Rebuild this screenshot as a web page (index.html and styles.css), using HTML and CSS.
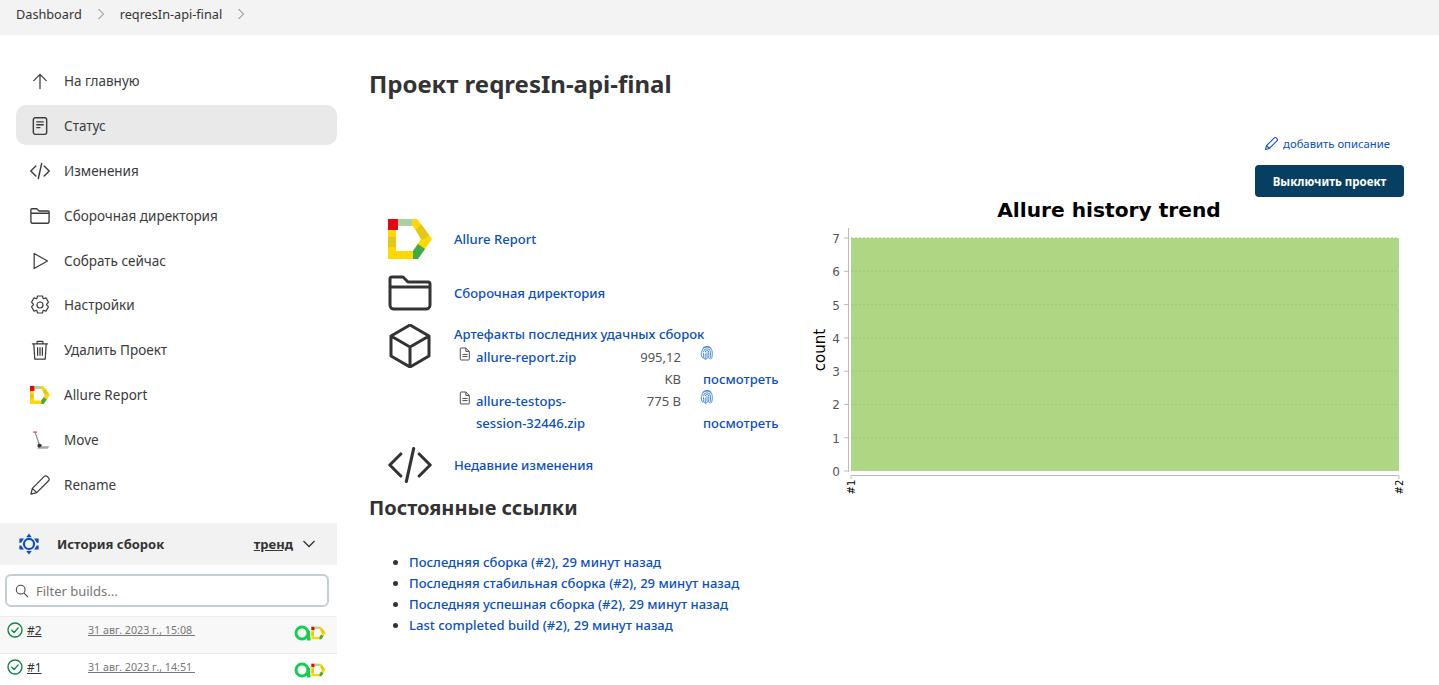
FILE: index.html
```html
<!DOCTYPE html>
<html lang="ru">

<head>
  <meta charset="UTF-8" />
  <title>reqresIn-api-final</title>
  <link rel="stylesheet" href="styles.css">
</head>

<body>
  <svg class="defs" width="0" height="0">
    <defs>
      <symbol id="allure" viewBox="0 0 44 40">
        <path d="M0 0H29L44 20L30 40H0ZM8 7V32H25L33 20L25 7Z" fill="#ffd800" fill-rule="evenodd" />
        <path d="M0 0h10v11H0z" fill="#e30613" />
        <path d="M10 0h14v7H10z" fill="#a9d3a3" />
        <path d="M33 5l8 11-4 4h-4l-5-9z" fill="#e3c814" />
        <path d="M0 18h8v10H0z" fill="#e3c814" />
        <path d="M37 30L30 40h-5v-8l5-7z" fill="#3dab4a" />
      </symbol>
      <symbol id="folder" viewBox="1 2 22 20">
        <path d="M2 6.500V18a2 2 0 0 0 2 2h16a2 2 0 0 0 2-2V7.500a1 1 0 0 0-1-1H11L9 4.500a1 1 0 0 0-.8-.5H3a1 1 0 0 0-1 1v1.500zM2 9h20" fill="none" stroke="currentColor" stroke-width="1.500" stroke-linejoin="round" />
      </symbol>
      <symbol id="code" viewBox="0 2 24 20">
        <path d="M7 6l-6 6 6 6M17 6l6 6-6 6M14 3l-4 18" fill="none" stroke="currentColor" stroke-width="1.700" stroke-linecap="round" stroke-linejoin="round" />
      </symbol>
      <symbol id="doc" viewBox="0 0 14 16">
        <path d="M2.500 1H8l4 4v9a1 1 0 0 1-1 1H2.500a1 1 0 0 1-1-1V2a1 1 0 0 1 1-1zM8 1v4h4M4 8.500h6M4 11h6" fill="none" stroke="currentColor" stroke-width="1.100" />
      </symbol>
      <symbol id="print" viewBox="0 0 16 18">
        <g fill="none" stroke="currentColor" stroke-width=".9">
          <path d="M2 7a6 6 0 0 1 12 0v3a6 6 0 0 1-2 5" />
          <path d="M3.500 14A6 6 0 0 1 1.500 10V7" />
          <path d="M4 7a4 4 0 0 1 8 0v4a4 4 0 0 1-1.500 3.500" />
          <path d="M5.500 15A5 5 0 0 1 4 10.500V8" />
          <path d="M6 7a2 2 0 0 1 4 0v4a4 4 0 0 1-1 3" />
          <path d="M7 16a5 5 0 0 1-1-4V8.500M8 7v4.500a3 3 0 0 1-.5 3" />
          <path d="M3 2.500a7 7 0 0 1 10 0" />
        </g>
      </symbol>
      <symbol id="ok" viewBox="0 0 16 16">
        <circle cx="8" cy="8" r="7" fill="none" stroke="#138347" stroke-width="1.400" />
        <path d="M4.800 8.200l2.300 2.300 4.100-4.600" fill="none" stroke="#138347" stroke-width="1.400" stroke-linecap="round" stroke-linejoin="round" />
      </symbol>
      <symbol id="ad" viewBox="0 0 32 16">
        <circle cx="8" cy="8" r="6" fill="none" stroke="#0fd14f" stroke-width="3" />
        <path d="M14.500 6v8h2" fill="none" stroke="#0fd14f" stroke-width="3" />
        <use href="#allure" x="17" y="1.500" width="15" height="13" />
      </symbol>
    </defs>
  </svg>

  <nav class="breadcrumbs">
    <a href="#">Dashboard</a>
    <svg class="crumb-sep" viewBox="0 0 8 12"><path d="M1.500 1l5 5-5 5" fill="none" stroke="currentColor" stroke-width="1" /></svg>
    <a href="#">reqresIn-api-final</a>
    <svg class="crumb-sep" viewBox="0 0 8 12"><path d="M1.500 1l5 5-5 5" fill="none" stroke="currentColor" stroke-width="1" /></svg>
  </nav>

  <div class="page">
    <aside class="sidebar">
      <ul class="tasks">
        <li class="task">
          <svg class="task-icon" viewBox="0 0 24 24"><path d="M12 21V4M4.500 11.500L12 4l7.500 7.500" fill="none" stroke="currentColor" stroke-width="1.500" stroke-linecap="round" stroke-linejoin="round" /></svg>
          На главную
        </li>
        <li class="task active">
          <svg class="task-icon" viewBox="0 0 24 24"><rect x="4" y="2" width="16" height="20" rx="2.500" fill="none" stroke="currentColor" stroke-width="1.700" /><path d="M7.500 7h9M7.500 10.500h9M7.500 14h5" fill="none" stroke="currentColor" stroke-width="1.600" /></svg>
          Статус
        </li>
        <li class="task">
          <svg class="task-icon"><use href="#code" /></svg>
          Изменения
        </li>
        <li class="task">
          <svg class="task-icon"><use href="#folder" /></svg>
          Сборочная директория
        </li>
        <li class="task">
          <svg class="task-icon" viewBox="0 0 24 24"><path d="M5 3v18L21 12z" fill="none" stroke="currentColor" stroke-width="1.500" stroke-linejoin="round" /></svg>
          Собрать сейчас
        </li>
        <li class="task">
          <svg class="task-icon" viewBox="2.500 1.500 19 20"><path d="M9.500 2.500h5l.8 2.800 2.700-.9 2.500 4.300-2 2.300 2 2.300-2.500 4.300-2.700-.9-.8 2.800h-5l-.8-2.800-2.700.9-2.500-4.300 2-2.300-2-2.300L6 4.400l2.700.9z" fill="none" stroke="currentColor" stroke-width="1.200" stroke-linejoin="round" /><circle cx="12" cy="11.500" r="3" fill="none" stroke="currentColor" stroke-width="1.200" /></svg>
          Настройки
        </li>
        <li class="task">
          <svg class="task-icon" viewBox="1.500 2 21 21"><path d="M3.500 6h17M9 6V3.500h6V6M5.500 6l1 16h11l1-16M9.500 9.500v9M12 9.500v9M14.500 9.500v9" fill="none" stroke="currentColor" stroke-width="1.300" stroke-linejoin="round" /></svg>
          Удалить Проект
        </li>
        <li class="task">
          <svg class="task-icon"><use href="#allure" /></svg>
          Allure Report
        </li>
        <li class="task">
          <svg class="task-icon" viewBox="0 0 24 24"><path d="M6 2.500l5.500 16" fill="none" stroke="#8a8a8a" stroke-width="1.500" /><path d="M3.500 2.500h5" stroke="#c4555a" stroke-width="1.500" /><circle cx="11.500" cy="19" r="2.600" fill="#333" /><path d="M8 22.500h13l2.500-3H14z" fill="#a8a8a8" /></svg>
          Move
        </li>
        <li class="task">
          <svg class="task-icon" viewBox="1.500 1.500 21 21"><path d="M2.500 21.500l1.500-6L16.500 3a2.100 2.100 0 0 1 3 0l1.500 1.500a2.100 2.100 0 0 1 0 3L8.500 20zM4 15.500l4.500 4.500" fill="none" stroke="currentColor" stroke-width="1.300" stroke-linejoin="round" /></svg>
          Rename
        </li>
      </ul>

      <section class="history">
        <header class="history-head">
          <svg class="history-icon" viewBox="0 0 24 24">
            <circle cx="12" cy="12" r="5.500" fill="none" stroke="#0b4fc0" stroke-width="2.400" />
            <path d="M12 .5l3 4H9zM12 23.500l-3-4h6zM1.500 6h5L3.500 10.500H1.500zM22.500 6h-5l3 4.500h2zM1.500 18h5l-3-4.500H1.500zM22.500 18h-5l3-4.500h2z" fill="#0b4fc0" />
          </svg>
          <span class="history-title">История сборок</span>
          <span class="history-trend">тренд</span>
          <svg class="history-chevron" viewBox="0 0 14 8"><path d="M1.500 1l5.500 5.500L12.500 1" fill="none" stroke="currentColor" stroke-width="1.300" /></svg>
        </header>
        <div class="filter">
          <svg class="filter-icon" viewBox="0 0 16 16"><circle cx="6.500" cy="6.500" r="5" fill="none" stroke="currentColor" stroke-width="1.200" /><path d="M10.300 10.300L15 15" stroke="currentColor" stroke-width="1.200" /></svg>
          <span class="filter-text">Filter builds...</span>
        </div>
        <div class="build even">
          <svg class="build-ok"><use href="#ok" /></svg>
          <a class="build-num" href="#">#2</a>
          <a class="build-date" href="#">31 авг. 2023 г., 15:08&nbsp;</a>
          <svg class="build-badge" viewBox="0 0 32 16"><use href="#ad" /></svg>
        </div>
        <div class="build">
          <svg class="build-ok"><use href="#ok" /></svg>
          <a class="build-num" href="#">#1</a>
          <a class="build-date" href="#">31 авг. 2023 г., 14:51&nbsp;</a>
          <svg class="build-badge" viewBox="0 0 32 16"><use href="#ad" /></svg>
        </div>
      </section>
    </aside>

    <main class="content">
      <h1 class="title">Проект reqresIn-api-final</h1>
      <div class="describe">
        <svg class="describe-icon" viewBox="0 0 24 24"><path d="M2.500 21.500l1.500-6L16.500 3a2.100 2.100 0 0 1 3 0l1.500 1.500a2.100 2.100 0 0 1 0 3L8.500 20zM4 15.500l4.500 4.500" fill="none" stroke="currentColor" stroke-width="1.700" stroke-linejoin="round" /></svg>
        <a href="#">добавить описание</a>
      </div>
      <div class="actions"><button class="disable-btn">Выключить проект</button></div>

      <div class="columns">
        <div class="left">
          <div class="link-row row-allure">
            <svg class="big-icon"><use href="#allure" /></svg>
            <a href="#">Allure Report</a>
          </div>
          <div class="link-row row-ws">
            <svg class="big-icon"><use href="#folder" /></svg>
            <a href="#">Сборочная директория</a>
          </div>
          <div class="link-row row-art">
            <svg class="big-icon cube-icon" viewBox="2 1 20 22"><path d="M12 1.500l9.500 5.500v10L12 22.500 2.500 17V7zM2.500 7L12 12.500 21.500 7M12 12.500v10" fill="none" stroke="currentColor" stroke-width="1.500" stroke-linejoin="round" /></svg>
            <div class="art-body">
              <a href="#">Артефакты последних удачных сборок</a>
              <div class="art-table">
                <svg class="file-icon"><use href="#doc" /></svg>
                <a href="#">allure-report.zip</a>
                <span class="art-size">995,12 KB</span>
                <a class="art-view" href="#"><svg class="print-icon"><use href="#print" /></svg><br>посмотреть</a>

                <svg class="file-icon"><use href="#doc" /></svg>
                <a href="#">allure-testops-session-32446.zip</a>
                <span class="art-size">775 B</span>
                <a class="art-view" href="#"><svg class="print-icon"><use href="#print" /></svg><br>посмотреть</a>
              </div>
            </div>
          </div>
          <div class="link-row row-changes">
            <svg class="big-icon"><use href="#code" /></svg>
            <a href="#">Недавние изменения</a>
          </div>
          <h2 class="perma-title">Постоянные ссылки</h2>
          <ul class="perma">
            <li><a href="#">Последняя сборка (#2), 29 минут назад</a></li>
            <li><a href="#">Последняя стабильная сборка (#2), 29 минут назад</a></li>
            <li><a href="#">Последняя успешная сборка (#2), 29 минут назад</a></li>
            <li><a href="#">Last completed build (#2), 29 минут назад</a></li>
          </ul>
        </div>

        <svg class="chart" viewBox="0 0 594 310" width="594" height="310">
          <text class="chart-title" x="299" y="20" text-anchor="middle">Allure history trend</text>
          <rect x="41" y="41" width="548" height="233" fill="#afd683" />
          <path class="grid" d="M41 41h548M41 74.300h548M41 107.600h548M41 140.900h548M41 174.200h548M41 207.500h548M41 240.800h548" />
          <path class="axis" d="M38.500 31v244M34 41h5M34 74.300h5M34 107.600h5M34 140.900h5M34 174.200h5M34 207.500h5M34 240.800h5M34 274h5M41 282v-3.500h548v3.500" />
          <g class="y-labels" text-anchor="end">
            <text x="30" y="46">7</text>
            <text x="30" y="79">6</text>
            <text x="30" y="113">5</text>
            <text x="30" y="146">4</text>
            <text x="30" y="179">3</text>
            <text x="30" y="212">2</text>
            <text x="30" y="246">1</text>
            <text x="30" y="279">0</text>
          </g>
          <text class="y-title" transform="translate(15 153) rotate(-90)" text-anchor="middle">count</text>
          <text class="x-label" transform="translate(45 290) rotate(-90)" text-anchor="middle">#1</text>
          <text class="x-label" transform="translate(593 290) rotate(-90)" text-anchor="middle">#2</text>
        </svg>
      </div>
    </main>
  </div>
</body>

</html>
```

FILE: styles.css
```css
* {
  box-sizing: border-box;
}

body {
  margin: 0;
  height: 685px;
  overflow: hidden;
  background: #fff;
  color: #333;
  font-family: "Noto Sans", "Open Sans", sans-serif;
  font-size: 13px;
}

a {
  color: #0b4fc0;
  text-decoration: none;
}

.defs {
  position: absolute;
}

.breadcrumbs {
  display: flex;
  align-items: center;
  height: 35px;
  padding: 0 0 7px 16px;
  background: #f3f3f3;
  font-size: 12.700px;
}

.breadcrumbs a {
  color: #333;
}

.crumb-sep {
  width: 8px;
  height: 12px;
  margin: 0 15px 0 15px;
  color: #777;
}

.page {
  display: flex;
}

.sidebar {
  flex: 0 0 337px;
  padding-top: 25px;
}

.tasks {
  list-style: none;
  margin: 0;
  padding: 0 0 0 16px;
}

.task {
  display: flex;
  align-items: center;
  gap: 14px;
  height: 40px;
  margin-top: 4.900px;
  padding: 2px 0 0 14px;
  border-radius: 10px;
  font-size: 13.500px;
  color: #3b3b3b;
}

.task:first-child {
  margin-top: 0;
}

.task.active {
  background: #e9e9e9;
}

.task-icon {
  width: 20px;
  height: 20px;
  flex: none;
}

.history {
  margin-top: 19px;
}

.history-head {
  display: flex;
  align-items: center;
  height: 42px;
  padding-left: 18px;
  background: #f2f2f2;
}

.history-icon {
  width: 22px;
  height: 22px;
  flex: none;
}

.history-title {
  margin-left: 17px;
  font-weight: 700;
}

.history-trend {
  margin-left: auto;
  font-weight: 700;
  text-decoration: underline;
}

.history-chevron {
  width: 14px;
  height: 8px;
  margin: 0 21px 0 9px;
}

.filter {
  display: flex;
  align-items: center;
  gap: 7px;
  width: 324px;
  height: 33px;
  margin: 9px 0 9px 5px;
  padding-left: 8px;
  border: 2px solid #c3cfd3;
  border-radius: 6px;
  color: #444;
}

.filter-icon {
  width: 14px;
  height: 14px;
}

.filter-text {
  color: #757575;
}

.build {
  display: flex;
  height: 37px;
  padding: 5px 11px 0 7px;
  border-top: 1px solid #ececec;
  font-size: 12px;
}

.build.even {
  background: #f8f8f8;
}

.build-ok {
  width: 16px;
  height: 16px;
  flex: none;
}

.build-num {
  width: 61px;
  margin-left: 4px;
  color: #333;
  text-decoration: underline;
}

.build-date {
  color: #777;
  font-size: 10.700px;
  line-height: 17px;
  text-decoration: underline;
}

.build-badge {
  width: 32px;
  height: 16px;
  margin: 3px 0 0 auto;
}

.content {
  flex: 1;
  padding: 0 35px 0 32px;
}

.title {
  margin: 31px 0 0;
  font-size: 24px;
  line-height: 36px;
  font-weight: 700;
}

.describe {
  display: flex;
  justify-content: flex-end;
  align-items: center;
  gap: 4px;
  margin: 32px 14px 0 0;
  height: 18px;
  font-size: 11.300px;
}

.describe-icon {
  width: 15px;
  height: 15px;
  color: #0b4fc0;
}

.actions {
  display: flex;
  justify-content: flex-end;
  margin-top: 13px;
}

.disable-btn {
  width: 149px;
  height: 32px;
  border: 0;
  border-radius: 4px;
  background: #063f62;
  color: #fff;
  font-family: inherit;
  font-size: 11.500px;
  font-weight: 700;
}

.columns {
  display: flex;
  justify-content: space-between;
}

.left {
  width: 410px;
  padding-top: 22px;
  font-size: 13.050px;
}

.link-row {
  display: flex;
  align-items: center;
  gap: 22px;
  padding-left: 19px;
  font-weight: 500;
}

.big-icon {
  width: 44px;
  height: 40px;
  flex: none;
}

.cube-icon {
  height: 44px;
  margin-top: 1px;
}

.row-ws {
  margin-top: 14px;
}

.row-art {
  align-items: flex-start;
  margin-top: 10px;
}

.row-changes {
  margin-top: 11px;
}

.art-body {
  line-height: 22px;
  flex: 1;
}

.art-table {
  display: grid;
  grid-template-columns: 11px 132px 67px auto;
  column-gap: 6px;
  margin: 1px 0 0 5px;
}

.file-icon {
  width: 12px;
  height: 14px;
  margin-top: 1px;
  color: #444;
}

.art-size {
  padding-left: 14px;
  text-align: right;
  color: #555;
  font-weight: 400;
}

.art-view {
  margin-left: 16px;
  white-space: nowrap;
}

.print-icon {
  width: 14px;
  height: 16px;
  margin-left: -3px;
  color: #1d6fd0;
}

.perma-title {
  margin: 8px 0 0;
  font-size: 20px;
  line-height: 30px;
  font-weight: 700;
}

.perma {
  margin: 29px 0 0;
  padding-left: 40px;
  line-height: 21px;
  font-weight: 500;
  white-space: nowrap;
}

.chart {
  flex: none;
  display: block;
}

.chart text {
  font-family: "DejaVu Sans", sans-serif;
}

.chart .chart-title {
  font-size: 20.200px;
  font-weight: 700;
  fill: #000;
}

.grid {
  fill: none;
  stroke: #9fc97a;
  stroke-width: 1;
  stroke-dasharray: 2 2;
}

.axis {
  fill: none;
  stroke: #bbb;
  stroke-width: 1;
}

.y-labels {
  font-size: 12px;
  fill: #555;
}

.chart .y-title {
  font-size: 15px;
  fill: #000;
}

.chart .x-label {
  font-size: 10px;
  fill: #000;
}
```
